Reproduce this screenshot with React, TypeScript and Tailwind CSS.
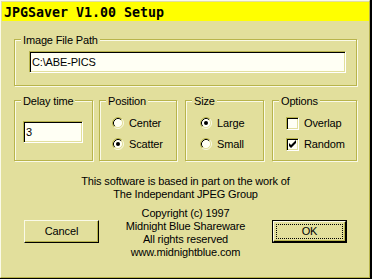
const checkPath = "M3 5 L5 7 L10 2 L10 5 L5 10 L3 8 Z";

function Radio({ checked }: { checked?: boolean }) {
  return (
    <svg width="12" height="12" viewBox="0 0 12 12" className="shrink-0">
      <circle cx="6" cy="6" r="4.5" fill="#fffff4" />
      <path d="M2.11 9.89 A5.5 5.5 0 0 1 9.89 2.11" fill="none" stroke="#b8b44c" />
      <path d="M9.89 2.11 A5.5 5.5 0 0 1 2.11 9.89" fill="none" stroke="#fafae8" />
      <path d="M2.82 9.18 A4.5 4.5 0 0 1 9.18 2.82" fill="none" stroke="#000" />
      <path d="M9.18 2.82 A4.5 4.5 0 0 1 2.82 9.18" fill="none" stroke="#e2df9c" />
      {checked && <circle cx="6" cy="6" r="2" fill="#000" />}
    </svg>
  );
}

function Check({ checked }: { checked?: boolean }) {
  return (
    <div className="h-[13px] w-[13px] shrink-0 border border-t-[#b8b44c] border-l-[#b8b44c] border-r-white border-b-white bg-[#fffff4] shadow-[inset_1px_1px_0_#000,inset_-1px_-1px_0_#e2df9c]">
      {checked && (
        <svg width="11" height="11" viewBox="1 1 11 11">
          <path d={checkPath} fill="#000" />
        </svg>
      )}
    </div>
  );
}

function GroupBox({
  label,
  className,
  children,
}: {
  label: string;
  className: string;
  children?: React.ReactNode;
}) {
  return (
    <div
      className={`border border-[#b8b44c] shadow-[1px_1px_0_#fafae8,inset_1px_1px_0_#fafae8] ${className}`}
    >
      <div className="ml-[6px] mt-[-6px] w-fit bg-[#e2df9c] px-[2px] leading-[13px]">
        {label}
      </div>
      {children}
    </div>
  );
}

function Option({
  children,
  offset,
  className,
}: {
  children: React.ReactNode;
  offset: string;
  className: string;
}) {
  return (
    <div className={`flex items-center ${offset} ${className}`}>
      {children}
    </div>
  );
}

export default function App() {
  return (
    <div className="h-[279px] w-[372px] bg-black pb-[1px] pr-[2px] font-['Liberation_Sans',Arial,sans-serif] text-[11px] tracking-[-0.15px] text-black">
      <div className="flex h-full flex-col border border-t-[#fafae8] border-l-[#fafae8] border-r-[#b8b44c] border-b-[#b8b44c] bg-[#e2df9c] pl-[1px] pt-[1px]">
        {/* Title */}
        <div className="h-[19px] shrink-0 bg-[#ffff00] pl-[2px] pt-[2px] font-['DejaVu_Sans_Mono',monospace] text-[13.3px] font-bold leading-[17px] tracking-normal">
          JPGSaver V1.00 Setup
        </div>

        {/* Image path */}
        <GroupBox label="Image File Path" className="ml-[12px] mt-[18px] h-[47px] w-[343px] shrink-0">
          <div className="ml-[14px] mt-[4px] h-[22px] w-[317px] border border-t-[#b8b44c] border-l-[#b8b44c] border-r-white border-b-white bg-[#fffff4] pl-[2px] leading-[20px] shadow-[inset_1px_1px_0_#000,inset_-1px_-1px_0_#e2df9c]">
            {"C:\\ABE-PICS"}
          </div>
        </GroupBox>

        {/* Settings row */}
        <div className="ml-[12px] mt-[14px] flex h-[61px] shrink-0">
          <GroupBox label="Delay time" className="h-full w-[79px]">
            <div className="ml-[8px] mt-[13px] h-[22px] w-[60px] border border-t-[#b8b44c] border-l-[#b8b44c] border-r-white border-b-white bg-[#fffff4] pl-[2px] leading-[20px] shadow-[inset_1px_1px_0_#000,inset_-1px_-1px_0_#e2df9c]">
              3
            </div>
          </GroupBox>

          <GroupBox label="Position" className="ml-[6px] h-full w-[78px]">
            <Option offset="ml-[12px]" className="mt-[9px] h-[12px]">
              <Radio />
              <span className="ml-[5px] leading-[13px]">Center</span>
            </Option>
            <Option offset="ml-[12px]" className="mt-[9px] h-[12px]">
              <Radio checked />
              <span className="ml-[5px] leading-[13px]">Scatter</span>
            </Option>
          </GroupBox>

          <GroupBox label="Size" className="ml-[8px] h-full w-[79px]">
            <Option offset="ml-[14px]" className="mt-[9px] h-[12px]">
              <Radio checked />
              <span className="ml-[5px] leading-[13px]">Large</span>
            </Option>
            <Option offset="ml-[14px]" className="mt-[9px] h-[12px]">
              <Radio />
              <span className="ml-[5px] leading-[13px]">Small</span>
            </Option>
          </GroupBox>

          <GroupBox label="Options" className="ml-[8px] h-full w-[85px]">
            <Option offset="ml-[13px]" className="mt-[9px] h-[13px]">
              <Check />
              <span className="ml-[5px] leading-[13px]">Overlap</span>
            </Option>
            <Option offset="ml-[13px]" className="mt-[8px] h-[13px]">
              <Check checked />
              <span className="ml-[5px] leading-[13px]">Random</span>
            </Option>
          </GroupBox>
        </div>

        {/* Credits */}
        <div className="mt-[14px] text-center leading-[13px]">
          <p>This software is based in part on the work of</p>
          <p>The Independant JPEG Group</p>
        </div>

        <div className="mt-[6px] flex items-start">
          <button className="ml-[22px] mt-[13px] flex h-[23px] w-[75px] items-center justify-center border border-t-[#fafae8] border-l-[#fafae8] border-r-black border-b-black leading-[13px] shadow-[inset_-1px_-1px_0_#b8b44c]">
            Cancel
          </button>
          <div className="flex-1 text-center leading-[13px]">
            <p>Copyright (c) 1997</p>
            <p>Midnight Blue Shareware</p>
            <p>All rights reserved</p>
            <p>www.midnightblue.com</p>
          </div>
          <div className="mr-[22px] mt-[13px] h-[23px] w-[75px] border border-black">
            <button className="h-full w-full border border-t-[#fafae8] border-l-[#fafae8] border-r-black border-b-black p-[2px] shadow-[inset_-1px_-1px_0_#b8b44c]">
              <span className="flex h-full w-full items-center justify-center border border-dotted border-black leading-[13px]">
                OK
              </span>
            </button>
          </div>
        </div>
      </div>
    </div>
  );
}
